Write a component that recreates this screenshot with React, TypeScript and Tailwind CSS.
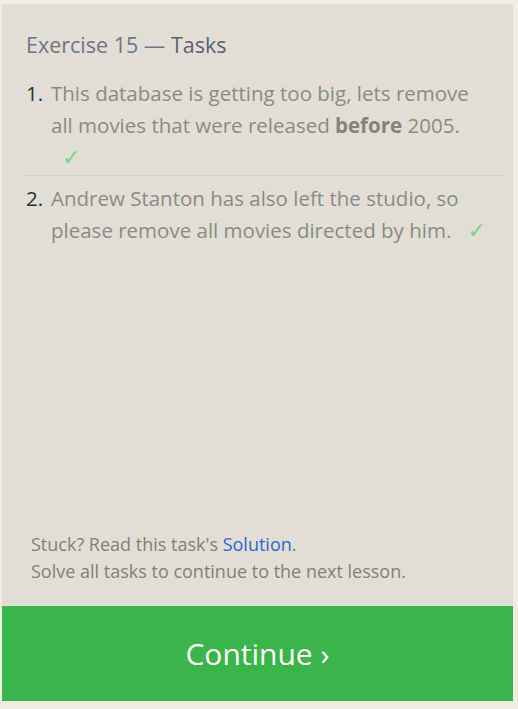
export default function App() {
  return (
    <div className="min-h-[709px] w-[518px] bg-[#efede4] pt-[4px] pb-[8px] pl-[2px] pr-[5px] font-['Open_Sans',sans-serif]">
      <div className="flex h-[697px] flex-col bg-[#e1dfd5]">
        <div className="flex-1 pl-6 pr-[10px] pt-[27px]">
          <h2 className="text-[21.5px] leading-7 text-[#6f7684]">
            Exercise 15 — <span className="text-[#5c6270]">Tasks</span>
          </h2>
          <ol className="mt-[18px] text-[20.5px] leading-[32px] text-[#8d8a84]">
            <li className="flex border-b border-[#d3d0c6] pb-px">
              <span className="w-[25px] shrink-0 text-[#2e2e2e]">1.</span>
              <span className="pr-[16px]">
                This database is getting too big, lets remove all movies that were released{" "}
                <b className="font-bold text-[#85827c]">before</b> 2005.{" "}
                <span className="ml-[11px] inline-block w-[16px] text-center font-['DejaVu_Sans',sans-serif] text-[22px] leading-[32px] text-[#7fcf8c]">✓</span>
              </span>
            </li>
            <li className="flex pt-[6px]">
              <span className="w-[25px] shrink-0 text-[#2e2e2e]">2.</span>
              <span className="pr-[16px]">
                Andrew Stanton has also left the studio, so please remove all movies directed by him.{" "}
                <span className="ml-[11px] inline-block w-[16px] text-center font-['DejaVu_Sans',sans-serif] text-[22px] leading-[32px] text-[#7fcf8c]">✓</span>
              </span>
            </li>
          </ol>
        </div>
        <div className="px-[29px] pb-[21px] text-[18px] leading-[27px] text-[#847f7a]">
          <p>
            Stuck? Read this task's <a className="text-[#2f66d0]">Solution</a>.
          </p>
          <p>Solve all tasks to continue to the next lesson.</p>
        </div>
        <button className="flex h-[95px] w-full items-center justify-center bg-[#3ab54a] text-[30px] text-white">
          Continue ›
        </button>
      </div>
    </div>
  );
}
